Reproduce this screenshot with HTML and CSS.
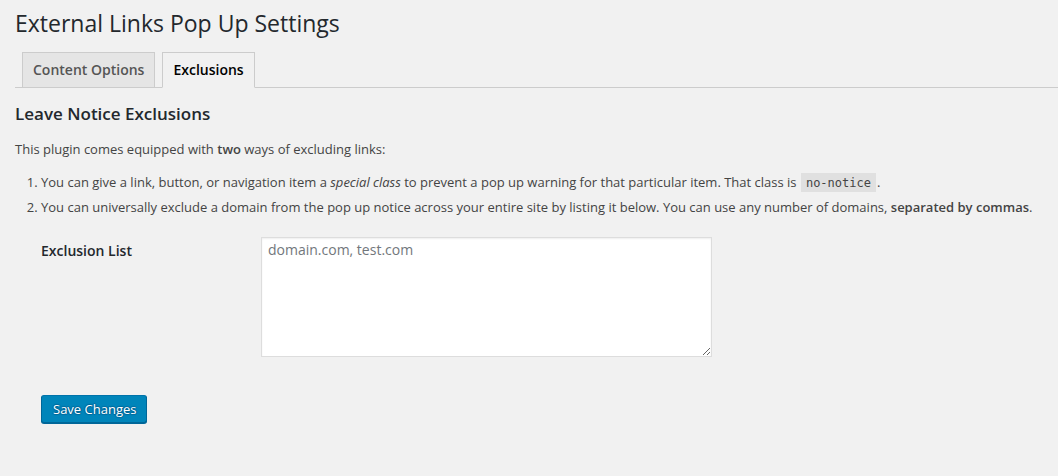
FILE: index.html
```html
<!DOCTYPE html>
<html>
<head>
<meta charset="utf-8">
<link rel="stylesheet" href="styles.css">
</head>
<body>
<div class="wrap">
  <h1 class="page-title">External Links Pop Up Settings</h1>
  <div class="nav-tab-wrapper">
    <a class="nav-tab">Content Options</a>
    <a class="nav-tab nav-tab-active">Exclusions</a>
  </div>
  <h3 class="section-title">Leave Notice Exclusions</h3>
  <p class="intro">This plugin comes equipped with <strong>two</strong> ways of excluding links:</p>
  <ol class="ways">
    <li>You can give a link, button, or navigation item a <em>special class</em> to prevent a pop up warning for that particular item. That class is <code>no-notice</code>.</li>
    <li>You can universally exclude a domain from the pop up notice across your entire site by listing it below. You can use any number of domains, <strong>separated by commas</strong>.</li>
  </ol>
  <div class="form-row">
    <div class="form-label">Exclusion List</div>
    <div class="form-field">
      <textarea class="exclusion-input" placeholder="domain.com, test.com"></textarea>
    </div>
  </div>
  <div class="submit">
    <button class="button-primary">Save Changes</button>
  </div>
</div>
</body>
</html>
```

FILE: styles.css
```css
html, body {
  margin: 0;
  padding: 0;
  background: #f1f1f1;
}
body {
  font-family: "Open Sans", "Noto Sans", sans-serif;
  font-size: 13px;
  line-height: 1.4em;
  color: #444;
  width: 1058px;
  height: 476px;
  overflow: hidden;
}
.wrap {
  padding-left: 15px;
}
.page-title {
  margin: 0;
  padding: 9px 15px 4px 0;
  font-size: 23px;
  font-weight: 400;
  line-height: 29px;
  color: #23282d;
}
.nav-tab-wrapper {
  display: flex;
  border-bottom: 1px solid #ccc;
  padding-top: 10px;
  margin: 0;
}
.nav-tab {
  display: block;
  border: 1px solid #ccc;
  border-bottom: none;
  margin-left: 7px;
  padding: 5px 10px;
  font-size: 14px;
  line-height: 24px;
  font-weight: 600;
  background: #e5e5e5;
  color: #555;
  text-decoration: none;
}
.nav-tab-active {
  background: #f1f1f1;
  color: #000;
  border-bottom: 1px solid #f1f1f1;
  margin-bottom: -1px;
}
.section-title {
  font-size: 17px;
  font-weight: 600;
  color: #23282d;
  line-height: 24px;
  margin: 14px 0 0;
}
.intro {
  margin: 13px 0 0;
  line-height: 20px;
}
.ways {
  margin: 14px 0 0;
  padding-left: 26px;
}
.ways li {
  line-height: 18px;
  margin-bottom: 6px;
}
code {
  font-family: "DejaVu Sans Mono", monospace;
  font-size: 12px;
  background: rgba(0,0,0,.07);
  padding: 3px 5px 2px;
  margin: 0 1px;
}
strong { font-weight: 600; color: #444; }
.form-row {
  display: flex;
  margin-top: 6px;
}
.form-label {
  width: 200px;
  padding: 20px 10px 20px 26px;
  font-size: 14px;
  font-weight: 600;
  color: #23282d;
  line-height: 1.3;
}
.form-field {
  padding: 15px 10px;
}
.exclusion-input {
  display: block;
  box-sizing: border-box;
  width: 451px;
  height: 120px;
  border: 1px solid #ddd;
  box-shadow: inset 0 1px 2px rgba(0,0,0,.07);
  background: #fff;
  color: #32373c;
  padding: 2px 6px;
  margin: 0;
  font-family: "Open Sans", "Noto Sans", sans-serif;
  font-size: 14px;
  line-height: 1.4;
}
.exclusion-input::placeholder { color: #72777c; }
.submit {
  padding: 10px 0 10px 26px;
  margin-top: 13px;
}
.button-primary {
  display: inline-block;
  box-sizing: border-box;
  height: 28px;
  margin: 0;
  padding: 0 10px 1px 11px;
  line-height: 26px;
  font-family: "Open Sans", "Noto Sans", sans-serif;
  font-size: 13px;
  background: #0085ba;
  border: 1px solid;
  border-color: #0073aa #006799 #006799;
  border-radius: 3px;
  box-shadow: 0 1px 0 #006799;
  color: #fff;
  text-shadow: 0 -1px 1px #006799, 1px 0 1px #006799, 0 1px 1px #006799, -1px 0 1px #006799;
}
```
